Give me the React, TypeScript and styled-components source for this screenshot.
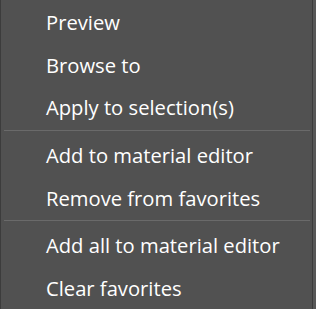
import React from "react";
import styled, { createGlobalStyle } from "styled-components";

const Global = createGlobalStyle`
  html, body { margin: 0; padding: 0; background: #515151; }
  body { width: 316px; height: 309px; overflow: hidden; }
`;

const Frame = styled.div`
  display: flex;
  width: 316px;
  height: 309px;
  background: #515151;
`;

const Menu = styled.div`
  flex: 0 0 313px;
  display: flex;
  flex-direction: column;
  padding-top: 1px;
  background: #515151;
  border-left: 1px solid #3c3c3c;
  border-right: 1px solid #3c3c3c;
  box-sizing: border-box;
`;

const Edge = styled.div`
  flex: 1;
  background: #575757;
`;

const Item = styled.div`
  height: 43px;
  display: flex;
  align-items: center;
  padding-left: 45px;
  font-family: "Open Sans", "Noto Sans", sans-serif;
  font-size: 20.2px;
  color: #ffffff;
  white-space: nowrap;
`;

const Separator = styled.div`
  height: 1px;
  margin: 1px 2px 3px 3px;
  background: #6a6a6a;
`;

export default function App() {
  return (
    <>
      <Global />
      <Frame>
        <Menu>
          <Item>Preview</Item>
          <Item>Browse to</Item>
          <Item>Apply to selection(s)</Item>
          <Separator />
          <Item>Add to material editor</Item>
          <Item>Remove from favorites</Item>
          <Separator />
          <Item>Add all to material editor</Item>
          <Item>Clear favorites</Item>
        </Menu>
        <Edge />
      </Frame>
    </>
  );
}
